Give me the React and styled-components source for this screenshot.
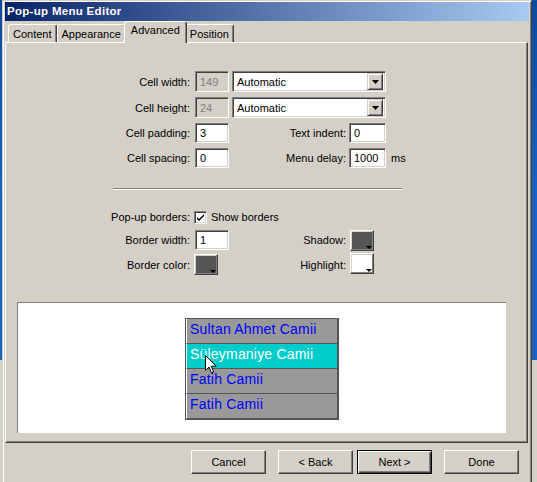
import styled, { createGlobalStyle } from "styled-components";

// data
const leftRows = [
  { id: "w", label: "Cell width:", value: "149" },
  { id: "h", label: "Cell height:", value: "24" },
];

const menuItems = [
  { id: 1, title: "Sultan Ahmet Camii" },
  { id: 2, title: "Süleymaniye Camii", hover: true },
  { id: 3, title: "Fatih Camii" },
  { id: 4, title: "Fatih Camii" },
];

const tabs = ["Content", "Appearance", "Advanced", "Position"];

// main
function App() {
  return (
    <>
      <GlobalStyle />
      <Dialog>
        <TitleBar>Pop-up Menu Editor</TitleBar>
        <TabRow>
          {tabs.map((t) => (
            <Tab key={t} $active={t === "Advanced"}>
              {t}
            </Tab>
          ))}
        </TabRow>
        <Panel>
          <Form>
            {leftRows.map((r) => (
              <Row key={r.id} $h={21}>
                <Label>{r.label}</Label>
                <TextBox $w={34} disabled>
                  {r.value}
                </TextBox>
                <Select>
                  Automatic
                  <DropButton>
                    <svg width="7" height="4" viewBox="0 0 7 4">
                      <path d="M0 0h7L3.5 4z" fill="#000" />
                    </svg>
                  </DropButton>
                </Select>
              </Row>
            ))}
            <Row $h={20}>
              <Label>Cell padding:</Label>
              <TextBox $w={34}>3</TextBox>
              <RightLabel>Text indent:</RightLabel>
              <TextBox $w={37}>0</TextBox>
            </Row>
            <Row $h={20}>
              <Label>Cell spacing:</Label>
              <TextBox $w={34}>0</TextBox>
              <RightLabel>Menu delay:</RightLabel>
              <TextBox $w={37}>1000</TextBox>
              <Unit>ms</Unit>
            </Row>

            <Separator />

            <Row $h={20} $top={17}>
              <Label>Pop-up borders:</Label>
              <CheckBox>
                <svg width="9" height="9" viewBox="0 0 9 9">
                  <path d="M1 4l2 2 5-5v2L3 8 1 6z" fill="#000" />
                </svg>
              </CheckBox>
              <CheckText>Show borders</CheckText>
            </Row>
            <Row $h={20} $top={3}>
              <Label>Border width:</Label>
              <TextBox $w={34}>1</TextBox>
              <RightLabel>Shadow:</RightLabel>
              <Swatch $color="#555555" $shift={1} />
            </Row>
            <Row $h={21} $top={4}>
              <Label>Border color:</Label>
              <Swatch $color="#555555" $shift={-1} />
              <RightLabel $w={128}>Highlight:</RightLabel>
              <Swatch $color="#ffffff" $shift={1} $lift />
            </Row>
          </Form>

          {/* preview */}
          <Preview>
            <Menu>
              {menuItems.map((m) => (
                <MenuItem key={m.id} $hover={m.hover}>
                  {m.title}
                </MenuItem>
              ))}
              <Cursor width="12" height="19" viewBox="0 0 12 19">
                <path
                  d="M0.5 0.5v15l3.5-3.5 2.5 6 2.2-1-2.5-5.8h5z"
                  fill="#fff"
                  stroke="#000"
                  strokeWidth="1"
                />
              </Cursor>
            </Menu>
          </Preview>
        </Panel>

        <ButtonRow>
          <Button $gap={12}>Cancel</Button>
          <Button $gap={4}>&lt; Back</Button>
          <Button $gap={12} $default>
            Next &gt;
          </Button>
          <Button>Done</Button>
        </ButtonRow>
      </Dialog>
    </>
  );
}

export default App;

// style
const GlobalStyle = createGlobalStyle`
  html, body {
    margin: 0;
    padding: 0;
  }
  body {
    width: 537px;
    height: 482px;
    overflow: hidden;
    background: linear-gradient(
      to bottom,
      #0d4a9c 0,
      #1a63c4 200px,
      #1a63c4 360px,
      #d4d0c8 360px
    );
    font-family: "Liberation Sans", Arial, sans-serif;
    font-size: 11px;
    color: #000;
  }
`;

const Dialog = styled.div`
  box-sizing: border-box;
  margin-left: 2px;
  width: 530px;
  height: 484px;
  padding: 1px 2px 0 2px;
  background: #d4d0c8;
  border: 1px solid;
  border-color: #d4d0c8 #404040 #404040 #d4d0c8;
  box-shadow: inset 1px 1px #fff, inset -1px -1px #808080;
`;

const TitleBar = styled.div`
  height: 19px;
  line-height: 19px;
  padding-left: 2px;
  color: #fff;
  font-weight: bold;
  font-size: 11.5px;
  letter-spacing: 0.3px;
  background: linear-gradient(to right, #0a246a, #a6caf0);
`;

const TabRow = styled.div`
  display: flex;
  align-items: flex-end;
  height: 21px;
  padding-left: 3px;
  position: relative;
  z-index: 2;
`;

const Tab = styled.div`
  box-sizing: border-box;
  height: ${(p) => (p.$active ? "22px" : "18px")};
  margin: ${(p) => (p.$active ? "0 -2px -1px -2px" : "0")};
  padding: ${(p) => (p.$active ? "1px 6px 0" : "2px 4px 0")};
  line-height: 14px;
  background: #d4d0c8;
  border: 1px solid;
  border-bottom: none;
  border-color: #fff #404040 transparent #fff;
  border-radius: 3px 3px 0 0;
  box-shadow: inset -1px 0 #808080;
  position: relative;
  z-index: ${(p) => (p.$active ? 2 : 1)};
`;

const Panel = styled.div`
  box-sizing: border-box;
  height: 401px;
  margin-right: 1px;
  padding-top: 28px;
  border: 1px solid;
  border-color: #fff #404040 #404040 #fff;
  box-shadow: inset -1px -1px #808080;
  position: relative;
  z-index: 1;
`;

const Form = styled.div`
  margin-left: 94px;
  display: flex;
  flex-direction: column;
`;

const Row = styled.div`
  display: flex;
  align-items: center;
  height: ${(p) => p.$h}px;
  margin-top: ${(p) => (p.$top !== undefined ? p.$top : 5)}px;

  &:first-child {
    margin-top: 0;
  }
`;

const Label = styled.div`
  width: 90px;
  text-align: right;
  padding-right: 5px;
  box-sizing: content-box;
  flex: none;
`;

const RightLabel = styled.div`
  width: ${(p) => p.$w || 117}px;
  text-align: right;
  padding-right: 3px;
  flex: none;
`;

const TextBox = styled.div`
  box-sizing: border-box;
  width: ${(p) => p.$w}px;
  height: 100%;
  padding-left: 4px;
  display: flex;
  align-items: center;
  background: ${(p) => (p.disabled ? "#d4d0c8" : "#fff")};
  color: ${(p) => (p.disabled ? "#808080" : "#000")};
  border: 1px solid;
  border-color: #808080 #fff #fff #808080;
  box-shadow: inset 1px 1px #404040, inset -1px -1px #d4d0c8;
  flex: none;
`;

const Select = styled.div`
  box-sizing: border-box;
  width: 154px;
  height: 100%;
  margin-left: 3px;
  padding-left: 4px;
  display: flex;
  align-items: center;
  justify-content: space-between;
  background: #fff;
  border: 1px solid;
  border-color: #808080 #fff #fff #808080;
  box-shadow: inset 1px 1px #404040, inset -1px -1px #d4d0c8;
  padding-right: 2px;
`;

const DropButton = styled.div`
  box-sizing: border-box;
  width: 16px;
  height: 17px;
  display: flex;
  align-items: center;
  justify-content: center;
  background: #d4d0c8;
  border: 1px solid;
  border-color: #d4d0c8 #404040 #404040 #d4d0c8;
  box-shadow: inset 1px 1px #fff, inset -1px -1px #808080;
`;

const Unit = styled.span`
  margin-left: 5px;
`;

const Separator = styled.div`
  margin: 20px 0 0 13px;
  width: 289px;
  height: 1px;
  background: #808080;
  border-bottom: 1px solid #fff;
`;

const CheckBox = styled.div`
  box-sizing: border-box;
  width: 13px;
  height: 13px;
  display: flex;
  align-items: center;
  justify-content: center;
  background: #fff;
  border: 1px solid;
  border-color: #808080 #fff #fff #808080;
  box-shadow: inset 1px 1px #404040, inset -1px -1px #d4d0c8;
  margin-left: -1px;
`;

const CheckText = styled.span`
  margin-left: 4px;
`;

const Swatch = styled.div`
  box-sizing: border-box;
  width: 24px;
  height: 21px;
  margin-left: ${(p) => p.$shift || 0}px;
  margin-top: ${(p) => (p.$lift ? "-3px" : "0")};
  position: relative;
  background: ${(p) => p.$color};
  border: 1px solid;
  border-color: #fff #404040 #404040 #fff;
  box-shadow: inset -1px -1px #808080, inset 1px 1px #d4d0c8;
  flex: none;

  &::after {
    content: "";
    position: absolute;
    right: 1px;
    bottom: 1px;
    border-top: 3px solid #000;
    border-left: 3px solid transparent;
    border-right: 3px solid transparent;
  }
`;

const Preview = styled.div`
  box-sizing: border-box;
  margin: 27px 0 0 11px;
  width: 489px;
  height: 131px;
  background: #fff;
  border-top: 1px solid #808080;
  border-left: 1px solid #808080;
  display: flex;
  align-items: center;
  justify-content: center;
`;

const Menu = styled.div`
  box-sizing: border-box;
  width: 154px;
  position: relative;
  border: 1px solid #555;
  border-right-width: 2px;
  border-bottom-width: 1px;
  margin-top: 2px;
`;

const MenuItem = styled.div`
  height: 24px;
  line-height: 21px;
  padding-left: 3px;
  border-left: 1px solid #fff;
  border-bottom: 1px solid #555;
  background: ${(p) => (p.$hover ? "#00cccc" : "#999999")};
  color: ${(p) => (p.$hover ? "#fff" : "#0000ff")};
  font-family: "Liberation Sans", Arial, sans-serif;
  font-size: 14px;
  letter-spacing: 0.2px;
  white-space: nowrap;
`;

const Cursor = styled.svg`
  position: absolute;
  left: 19px;
  top: 36px;
`;

const ButtonRow = styled.div`
  display: flex;
  margin-top: 7px;
  padding-left: 186px;
`;

const Button = styled.div`
  box-sizing: border-box;
  width: 75px;
  height: 24px;
  margin-right: ${(p) => p.$gap || 0}px;
  display: flex;
  align-items: center;
  justify-content: center;
  background: #d4d0c8;
  border: 1px solid;
  border-color: ${(p) =>
    p.$default ? "#000" : "#fff #404040 #404040 #fff"};
  box-shadow: ${(p) =>
    p.$default
      ? "inset 1px 1px #fff, inset -1px -1px #404040, inset -2px -2px #808080"
      : "inset -1px -1px #808080"};
`;
